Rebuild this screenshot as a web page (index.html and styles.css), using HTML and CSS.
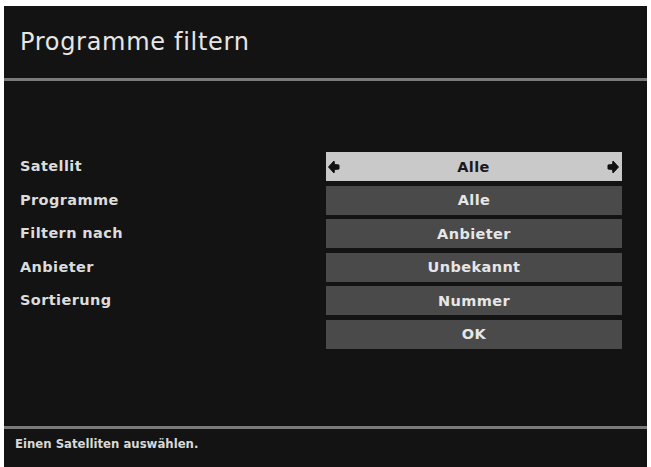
FILE: index.html
```html
<!DOCTYPE html>
<html lang="de">
<head>
<meta charset="utf-8">
<title>Programme filtern</title>
<link rel="stylesheet" href="styles.css">
</head>
<body>
<div class="screen">
  <div class="header"><h1 class="title">Programme filtern</h1></div>
  <div class="rule"></div>
  <div class="content">
    <div class="labels">
      <div class="label">Satellit</div>
      <div class="label">Programme</div>
      <div class="label">Filtern nach</div>
      <div class="label">Anbieter</div>
      <div class="label">Sortierung</div>
    </div>
    <div class="values">
      <div class="value selected">
        <svg class="arrow" width="12" height="14" viewBox="0 0 12 14"><path d="M0.5 7 L6 1 L6.5 4.5 L11 5 L11 9 L6.5 9.5 L6 13 Z" fill="#111" stroke="#111" stroke-width="1" stroke-linejoin="round"/></svg>
        <span>Alle</span>
        <svg class="arrow" width="12" height="14" viewBox="0 0 12 14"><path d="M11.5 7 L6 1 L5.5 4.5 L1 5 L1 9 L5.5 9.5 L6 13 Z" fill="#111" stroke="#111" stroke-width="1" stroke-linejoin="round"/></svg>
      </div>
      <div class="value">Alle</div>
      <div class="value">Anbieter</div>
      <div class="value">Unbekannt</div>
      <div class="value">Nummer</div>
      <div class="value">OK</div>
    </div>
  </div>
  <div class="rule"></div>
  <div class="footer">Einen Satelliten auswählen.</div>
</div>
</body>
</html>
```

FILE: styles.css
```css
html, body {
  margin: 0;
  padding: 0;
  background: #ffffff;
}
.screen {
  margin: 6px 4px 0 4px;
  height: 461px;
  background: #131313;
  display: flex;
  flex-direction: column;
  font-family: "DejaVu Sans", sans-serif;
  color: #e2e2e2;
}
.header {
  height: 72px;
  display: flex;
  align-items: center;
  padding-left: 16px;
}
.title {
  margin: 0;
  font-size: 24px;
  font-weight: normal;
  color: #e6e6e6;
  letter-spacing: 0.7px;
}
.rule {
  height: 3px;
  background: #7a7a7a;
}
.content {
  flex: 1;
  display: flex;
  padding-top: 71px;
}
.labels {
  width: 322px;
  display: flex;
  flex-direction: column;
  padding-left: 16px;
  box-sizing: border-box;
}
.label {
  height: 33.5px;
  line-height: 29px;
  font-size: 14.5px;
  font-weight: bold;
  letter-spacing: 0.4px;
  color: #dcdcdc;
}
.values {
  width: 296px;
  display: flex;
  flex-direction: column;
  gap: 4.5px;
}
.value {
  height: 29px;
  background: #4a4a4a;
  display: flex;
  align-items: center;
  justify-content: center;
  font-size: 14.5px;
  font-weight: bold;
  letter-spacing: 0.4px;
  color: #e6e6e6;
}
.value.selected {
  background: #c9c9c9;
  color: #1a1a1a;
  justify-content: space-between;
  padding: 0 3px 0 2px;
}
.footer {
  height: 38px;
  line-height: 30px;
  padding-left: 11px;
  font-size: 13px;
  font-weight: bold;
  color: #d8d8d8;
  font-family: "DejaVu Sans Condensed", "DejaVu Sans", sans-serif;
}
```
